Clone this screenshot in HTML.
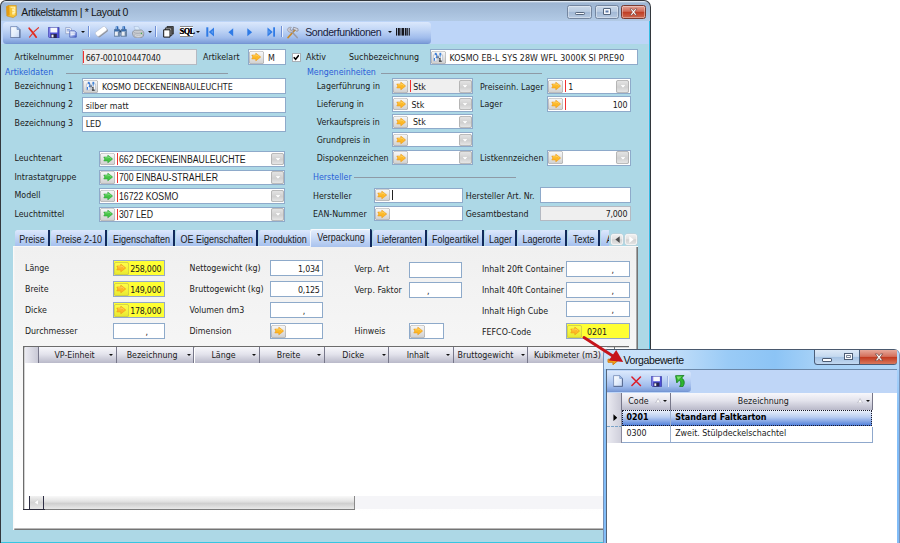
<!DOCTYPE html><html lang="de"><head><meta charset="utf-8"><title>Artikelstamm</title><style>
html,body{margin:0;padding:0}
body{width:900px;height:543px;overflow:hidden;background:#fff;position:relative;font-family:'DejaVu Sans Condensed','DejaVu Sans','Liberation Sans',sans-serif;font-stretch:condensed;font-size:8.8px;color:#1a1a1a}
div{position:absolute;box-sizing:content-box}
.lbl{height:16px;line-height:16px;white-space:pre}
.t{font-family:'DejaVu Sans Condensed','DejaVu Sans','Liberation Sans',sans-serif;font-stretch:condensed;font-size:8.8px}
.a{font-family:'Liberation Sans',sans-serif;font-stretch:normal;font-size:10px;transform:scaleX(.873);transform-origin:0 50%}
.n{letter-spacing:-.22px}
.s{font-family:'Liberation Sans',sans-serif;font-stretch:normal;font-size:10.5px;letter-spacing:-.39px}
.blue{color:#2a5fd8}
.fld{border:1px solid #8eaaca}
.red{width:1px;background:#f03030}
.abtn{border-radius:2.5px;background:linear-gradient(#fafafa,#e2e2e2 55%,#cfcfcf);box-shadow:0 0 0 .6px #a9a9a9 inset}
.abtn svg{position:absolute;left:50%;top:50%;transform:translate(-50%,-50%)}
.dd{border-radius:2.5px;background:linear-gradient(#e6e6e6,#d0d0d0 55%,#eaeaea);box-shadow:0 0 0 .8px #adadad inset}
.dd svg{position:absolute;left:50%;top:50%;transform:translate(-50%,-40%)}
.hl{height:1px;background:#8e9aa6}
.tab{height:16px;top:230.3px;border-radius:2.5px 0 0 0;background:linear-gradient(#dce8fc,#c0d4f5 50%,#a6c1ee);border-right:2px solid #122a5c;font-family:'Liberation Sans',sans-serif;font-size:10.6px;line-height:18.4px;text-align:center;white-space:pre;color:#1a1a1a}
.tsx{display:inline-block;position:relative;left:.8px;transform:scaleX(.85);margin:0 -8px}
.gh{top:346.5px;height:16.5px;background:linear-gradient(#f7f7fb,#e3e3ec 45%,#b9b9c9);border-right:1px solid #77778a;line-height:16.5px;text-align:center;font-family:'DejaVu Sans Condensed','DejaVu Sans','Liberation Sans',sans-serif;font-size:8.8px;white-space:pre}
.ga{width:0;height:0;border-left:2.2px solid transparent;border-right:2.2px solid transparent;border-top:2.6px solid #111}
</style></head><body>
<div style="left:0;top:0;width:651px;height:543px;background:#33373c;border-radius:6px 7px 0 0"></div>
<div style="left:1.2px;top:.8px;width:649px;height:543px;background:linear-gradient(#dde7f2 0,#dde7f2 .8px,#9db5d2 1.8px,#a7bfdb 11px,#b3cbe6 20.5px,#b3cbe6);border-radius:5px 6px 0 0"></div>
<div style="left:1.2px;top:21px;width:647.7px;height:23px;background:#bdd5f8"></div>
<div style="left:3px;top:21.8px;width:428.3px;height:22px;border-radius:3.5px;background:linear-gradient(#dbe8fc,#bfd4f5 38%,#a0bcec 72%,#7f9fda 94%,#6f90cf)"></div>
<div style="left:1.2px;top:44px;width:647.7px;height:498px;background:#add8e6"></div>
<div style="left:647.6px;top:44px;width:1.3px;height:498px;background:#bcd3ea"></div>
<div style="left:648.9px;top:21px;width:1.3px;height:522px;background:#35bde3"></div>
<div style="left:1.2px;top:541.9px;width:649px;height:1.2px;background:#36c6e2"></div>
<svg style="position:absolute;left:6.4px;top:4.6px" width="11" height="13" viewBox="0 0 11 13"><path d="M.5 1.6 3.2.3h7l.3 10L7.2 12.6.900 11z" fill="#f6c437" stroke="#c98a14" stroke-width=".6"/><path d="M.5 1.6 3.2.3 3.6 10.3.900 11z" fill="#e39a12"/><path d="M4.6 2.3h4.2v1.8H6.8v1.5h2v1.8h-2v1.5h2" fill="none" stroke="#fff3b8" stroke-width="1.1"/></svg>
<div class="lbl s" style="left:21.3px;top:3.8px;color:#161616">Artikelstamm | * Layout 0</div>
<div style="left:567.2px;top:5px;width:23.2px;height:12px;border:.8px solid #7486a0;border-radius:2.5px;background:linear-gradient(#c9d7e8,#b9cbe1 45%,#a3b9d6 52%,#b6c9e0);box-shadow:0 0 0 .8px rgba(255,255,255,.45) inset"></div>
<div style="left:594.5px;top:5px;width:22.4px;height:12px;border:.8px solid #7486a0;border-radius:2.5px;background:linear-gradient(#c9d7e8,#b9cbe1 45%,#a3b9d6 52%,#b6c9e0);box-shadow:0 0 0 .8px rgba(255,255,255,.45) inset"></div>
<div style="left:621px;top:5px;width:23.4px;height:12px;border:.8px solid #7a3a30;border-radius:2.5px;background:linear-gradient(#e2a195,#cf6a58 45%,#bf3b22 50%,#cf6a52);box-shadow:0 0 0 .8px rgba(255,255,255,.45) inset"></div>
<div style="left:575.2px;top:11.5px;width:7.4px;height:1.9px;background:#f6f8fb;border:.7px solid #55657c;border-radius:1.2px"></div>
<div style="left:602.5px;top:8.2px;width:6.8px;height:5.2px;background:#5c7aa8;border:.7px solid #55657c;border-radius:1px;box-shadow:0 0 0 1.5px #f6f8fb inset"></div>
<svg style="position:absolute;left:629px;top:7.5px" width="9" height="8" viewBox="0 0 9 8"><path d="M1 .8h2l1.5 1.9L6 .8h2L5.6 4 8 7.2H6L4.5 5.3 3 7.2H1L3.4 4z" fill="#fff" stroke="#6b3a36" stroke-width=".6"/></svg>
<svg style="position:absolute;left:10.2px;top:25.8px" width="10.5" height="12.5" viewBox="0 0 10.5 12.5"><defs><linearGradient id="dg" x1="0" y1="0" x2="1" y2="1"><stop offset="0" stop-color="#fbfdff"/><stop offset=".55" stop-color="#e3edfb"/><stop offset="1" stop-color="#bdd2f4"/></linearGradient></defs><path d="M.6.6h6.4l2.9 2.9v8.4H.6z" fill="url(#dg)" stroke="#7a90ba" stroke-width=".9"/><path d="M9.9 3.5v8.4H.6" fill="none" stroke="#56698f" stroke-width="1"/><path d="M7 .6v2.9h2.9z" fill="#9fc0f0" stroke="#6a84b4" stroke-width=".6"/></svg>
<svg style="position:absolute;left:28px;top:26.6px" width="11.5" height="11" viewBox="0 0 13 12.8"><path d="M1.2 1.4C3.6 4.4 6.4 7.6 9.4 11.8" fill="none" stroke="#e2281c" stroke-width="2" stroke-linecap="round"/><path d="M12 .8C8.4 3.4 4.8 7.2 1.6 11.8" fill="none" stroke="#e2392c" stroke-width="1.3" stroke-linecap="round"/></svg>
<svg style="position:absolute;left:48px;top:26.8px" width="11.5" height="11.5" viewBox="0 0 11.5 11.5"><path d="M.4.4h10.7v10.7H1.8L.4 9.7z" fill="#4d4fd6" stroke="#2a2b8e" stroke-width=".6"/><path d="M.7.7h1.3v9.8H1.6L.7 9.6z" fill="#7d7fe6"/><rect x="2.3" y=".7" width="7" height="4.8" fill="#f6f7fc"/><rect x="2.8" y="6.9" width="6" height="4.1" fill="#26264e"/><rect x="3.5" y="7.7" width="2" height="2.7" fill="#f0f1f7"/></svg>
<svg style="position:absolute;left:65px;top:27.2px" width="12.2" height="10.6" viewBox="0 0 13 11.8"><defs><linearGradient id="cg" x1="0" y1="0" x2="1" y2="1"><stop offset="0" stop-color="#f4f7fd"/><stop offset=".5" stop-color="#b9c8f0"/><stop offset="1" stop-color="#3a52c4"/></linearGradient></defs><path d="M.5.5h4.8l1.7 1.7v5.3H.5z" fill="#eef1f8" stroke="#8b9cc4" stroke-width=".8"/><path d="M1.7 2.7h3.4M1.7 4.3h3.4" stroke="#5b7fd0" stroke-width=".8"/><path d="M5 4.2h5.4l1.9 1.9v5.2H5z" fill="url(#cg)" stroke="#3f56b4" stroke-width=".8"/><path d="M6.2 6.6h4.4M6.2 8.3h4.4" stroke="#f2f5fc" stroke-width=".9"/></svg>
<div class="ga" style="left:81px;top:30.8px"></div>
<div style="left:88.3px;top:26px;width:1px;height:11px;background:#6f8fd6"></div><div style="left:89.3px;top:26.3px;width:1px;height:11px;background:#edf3fd"></div>
<svg style="position:absolute;left:94.5px;top:26.3px" width="13" height="11.5" viewBox="0 0 13 11.5"><g transform="rotate(-37 6.5 5.75)"><rect x=".6" y="4" width="12" height="5.2" rx="1.6" fill="#8f939c"/><rect x=".4" y="2.6" width="12" height="5.2" rx="1.6" fill="#fff" stroke="#b4bac8" stroke-width=".5"/></g></svg>
<svg style="position:absolute;left:114px;top:26.3px" width="13" height="10.8" viewBox="0 0 13 10.8"><path d="M1.8.3h2.4l.3 3.3H1.5z" fill="#2b66b4"/><path d="M2.5.5v3" stroke="#a9cdf2" stroke-width=".7"/><path d="M.5 3.5h5l.3 6.7H.2z" fill="#e9edf3" stroke="#37577f" stroke-width=".7"/><path d="M.6 3.6h4.8l.1 2H.5z" fill="#3a6cab"/><path d="M3.9 5.6h1.5l.2 4.4H3.9z" fill="#6d87a8"/><g transform="translate(6.8 0)"><path d="M1.8.3h2.4l.3 3.3H1.5z" fill="#2b66b4"/><path d="M2.5.5v3" stroke="#a9cdf2" stroke-width=".7"/><path d="M.5 3.5h5l.3 6.7H.2z" fill="#e9edf3" stroke="#37577f" stroke-width=".7"/><path d="M.6 3.6h4.8l.1 2H.5z" fill="#3a6cab"/><path d="M3.9 5.6h1.5l.2 4.4H3.9z" fill="#6d87a8"/></g><path d="M5.5 4.4h1.6v2H5.5z" fill="#27466e"/></svg>
<svg style="position:absolute;left:132.3px;top:25.8px" width="12.4" height="12.6" viewBox="0 0 12.4 12.6"><path d="M2 .5 6.2.3 8.6 4.6 3.6 5.2z" fill="#d6e8fb" stroke="#9fb4d2" stroke-width=".5"/><path d="M.5 6.2C1.5 4.4 3.4 3.8 5 4.2L9.4 4C11 4.6 11.9 6 11.8 7.6L11.4 10.2C9.8 12 6.4 12.6 3.6 11.8 1.6 11 .3 9 .5 6.2z" fill="#c9ccd1" stroke="#7f858f" stroke-width=".7"/><path d="M2.4 8.6C4.6 10 8 10 10.6 8.4L10.4 10C8 11.4 4.6 11.2 2.6 10z" fill="#eef0f2" stroke="#8b919b" stroke-width=".4"/><path d="M1.6 6.4C3.8 7.8 8.4 7.6 10.8 6.2" fill="none" stroke="#9096a0" stroke-width=".6"/><circle cx="9.5" cy="7.4" r=".7" fill="#3fae4a"/></svg>
<div class="ga" style="left:148px;top:30.8px"></div>
<div style="left:155.10000000000002px;top:26px;width:1px;height:11px;background:#6f8fd6"></div><div style="left:156.10000000000002px;top:26.3px;width:1px;height:11px;background:#edf3fd"></div>
<svg style="position:absolute;left:163px;top:26.3px" width="11" height="11.8" viewBox="0 0 11 11.8"><path d="M4 .5h6.3v7.6H4z" fill="#5e5e5e" stroke="#222" stroke-width=".8"/><path d="M2.4 1.9h6.4v7.7H2.4z" fill="#a9a9a9" stroke="#222" stroke-width=".8"/><path d="M.7 3.8h6.3v7.3H.7z" fill="#fff" stroke="#111" stroke-width="1"/></svg>
<div style="left:179.6px;top:26px;width:13px;height:11.4px;background:#fff;border-top:1.2px solid #8a8a8a;border-bottom:1.2px solid #8a8a8a;box-sizing:border-box"></div>
<div style="left:179.6px;top:26px;width:13px;height:11.4px;line-height:11.4px;text-align:center;font-family:'Liberation Serif',serif;font-weight:bold;font-size:8px;color:#000;letter-spacing:-.35px;text-shadow:.3px 0 0 #000">SQL</div>
<div class="ga" style="left:196px;top:30.8px"></div>
<svg style="position:absolute;left:206px;top:27px" width="8.5" height="10" viewBox="0 0 8.5 10"><rect x=".3" y=".3" width="2" height="9.4" fill="#2f7be6"/><path d="M8 .4 2.8 5 8 9.6z" fill="#2f7be6"/><path d="M7.2 3 5 5l2.2 2z" fill="#5b9bf0"/></svg>
<svg style="position:absolute;left:228px;top:28px" width="5.5" height="8.5" viewBox="0 0 5.5 8.5"><path d="M5.2.3.4 4.25l4.8 3.95z" fill="#2f7be6"/></svg>
<svg style="position:absolute;left:247.3px;top:28px" width="5.5" height="8.5" viewBox="0 0 5.5 8.5"><path d="M.3.3l4.8 3.95L.3 8.2z" fill="#2f7be6"/></svg>
<svg style="position:absolute;left:266.6px;top:27px" width="8.5" height="10" viewBox="0 0 8.5 10"><rect x="6.2" y=".3" width="2" height="9.4" fill="#2f7be6"/><path d="M.5.4 5.7 5 .5 9.6z" fill="#2f7be6"/><path d="M1.3 3 3.5 5 1.3 7z" fill="#5b9bf0"/></svg>
<div style="left:280.8px;top:26px;width:1px;height:11px;background:#6f8fd6"></div><div style="left:281.8px;top:26.3px;width:1px;height:11px;background:#edf3fd"></div>
<svg style="position:absolute;left:286px;top:25.5px" width="13" height="13" viewBox="0 0 13 13"><path d="M2 11.6 9.4 3.4" stroke="#c98a2b" stroke-width="1.6" stroke-linecap="round"/><path d="M11.2 11.6 4.2 4" stroke="#9a9aa4" stroke-width="1.5" stroke-linecap="round"/><path d="M1.4 3.4C2 1.6 3.8.8 5.4 1.4L4 3l.6 1.2 1.6.2 1-1.6c.8 1.6-.2 3.4-2 3.6-2 .2-3.6-1.2-3.8-3z" fill="#c9c9d2" stroke="#7c7c88" stroke-width=".5"/><path d="M7.6 1.2 11.8 2.6 12.2 4.6 10.6 5.4 9.8 4.2 7 3.4z" fill="#d9d9e0" stroke="#70707c" stroke-width=".6"/></svg>
<div class="lbl s" style="left:305.2px;top:24.3px;color:#16203a">Sonderfunktionen</div>
<div class="ga" style="left:387.8px;top:31.2px"></div>
<svg style="position:absolute;left:396px;top:28px" width="14" height="7.6" viewBox="0 0 14 7.6"><rect x="0" y="0" width="1.2" height="7.6" fill="#15151c"/><rect x="2" y="0" width="1.8" height="7.6" fill="#15151c"/><rect x="4.5" y="0" width="1" height="7.6" fill="#15151c"/><rect x="6" y="0" width="2.2" height="7.6" fill="#15151c"/><rect x="9" y="0" width="1.6" height="7.6" fill="#15151c"/><rect x="11.2" y="0" width="0.9" height="7.6" fill="#15151c"/><rect x="12.8" y="0" width="1" height="7.6" fill="#15151c"/></svg>
<div class="lbl t" style="left:14.5px;top:49px;">Artikelnummer</div>
<div class="fld" style="left:82px;top:49.3px;width:112.5px;height:13.9px;background:#efefef;border-color:#b4b9c2"></div>
<div class="red" style="left:83.1px;top:51.3px;height:11.9px"></div>
<div class="lbl t n" style="left:85.7px;top:49.95px;">667-001010447040</div>
<div class="lbl t" style="left:203px;top:49.3px;">Artikelart</div>
<div class="fld" style="left:247.5px;top:49.3px;width:36px;height:13.9px;background:#fff;border-color:#8eaaca"></div>
<div class="abtn" style="left:248.7px;top:50.8px;width:15px;height:12.9px;"><svg class="ar" viewBox="0 0 12 10" width="10.5" height="9.2"><path d="M1.2 2.8h4.6V.6L11.4 5 5.8 9.4V7.2H1.2L2.4 5z" fill="#fdb827" stroke="#ee9a16" stroke-width=".7" stroke-linejoin="round"/><path d="M2.6 3.6h4V2.4L9.6 4.6" fill="none" stroke="#ffd96a" stroke-width=".8"/></svg></div>
<div class="lbl t" style="left:268px;top:49.95px;">M</div>
<div style="left:291.5px;top:53px;width:7.2px;height:7.4px;background:#fff;border:.8px solid #a9afb6"></div>
<svg style="position:absolute;left:292.8px;top:54.2px" width="6.6" height="6.6" viewBox="0 0 7 6.6"><path d="M.8 3.2 2.8 5.4 6.2 1" fill="none" stroke="#000" stroke-width="1.7"/></svg>
<div class="lbl t" style="left:306px;top:49.3px;">Aktiv</div>
<div class="lbl t" style="left:349px;top:49.3px;">Suchbezeichnung</div>
<div class="fld" style="left:429.5px;top:49.3px;width:206px;height:13.9px;background:#fff;border-color:#8eaaca"></div>
<div class="abtn" style="left:430.7px;top:50.8px;width:15px;height:12.9px;"><svg class="ar" viewBox="0 0 12 10" width="11.5" height="9.5"><path d="M2.6.4h1.8v2.4H2.6zM7.6.4h1.8v2.4H7.6z" fill="#3f7fd8"/><path d="M1.2 2.8h3.8v6.6H1.2zM7 2.8h3.8v6.6H7z" fill="#f4f6fa" stroke="#9aa6ba" stroke-width=".5"/><path d="M3.8 1.5c1.4 1.2 1.4 3.2 0 4.6M2.2 6v3" fill="none" stroke="#2f74d8" stroke-width="1.1"/><path d="M8.4 1.2v3.6" stroke="#3f8ae0" stroke-width="1"/><path d="M5 4.2h2v2.2H5z" fill="#6d7a90"/><path d="M7.2 6.4 8.6 5.6v3.8H7.6V7.2z" fill="#111"/><path d="M7 9.4h3" stroke="#111" stroke-width=".9"/></svg></div>
<div class="lbl t" style="left:449.5px;top:49.95px;letter-spacing:.08px">KOSMO EB-L SYS 28W WFL 3000K SI PRE90</div>
<div class="lbl t blue" style="left:5px;top:64px;">Artikeldaten</div>
<div class="hl" style="left:66px;top:72.5px;width:161.5px"></div>
<div class="lbl t blue" style="left:307px;top:64px;">Mengeneinheiten</div>
<div class="hl" style="left:380.5px;top:72.5px;width:161px"></div>
<div class="lbl t" style="left:14.5px;top:77.7px;">Bezeichnung 1</div>
<div class="fld" style="left:82px;top:78.3px;width:201.5px;height:13.9px;background:#fff;border-color:#8eaaca"></div>
<div class="abtn" style="left:83.2px;top:79.8px;width:15px;height:12.9px;"><svg class="ar" viewBox="0 0 12 10" width="11.5" height="9.5"><path d="M2.6.4h1.8v2.4H2.6zM7.6.4h1.8v2.4H7.6z" fill="#3f7fd8"/><path d="M1.2 2.8h3.8v6.6H1.2zM7 2.8h3.8v6.6H7z" fill="#f4f6fa" stroke="#9aa6ba" stroke-width=".5"/><path d="M3.8 1.5c1.4 1.2 1.4 3.2 0 4.6M2.2 6v3" fill="none" stroke="#2f74d8" stroke-width="1.1"/><path d="M8.4 1.2v3.6" stroke="#3f8ae0" stroke-width="1"/><path d="M5 4.2h2v2.2H5z" fill="#6d7a90"/><path d="M7.2 6.4 8.6 5.6v3.8H7.6V7.2z" fill="#111"/><path d="M7 9.4h3" stroke="#111" stroke-width=".9"/></svg></div>
<div class="lbl t" style="left:102px;top:78.95px;">KOSMO DECKENEINBAULEUCHTE</div>
<div class="lbl t" style="left:14.5px;top:96.4px;">Bezeichnung 2</div>
<div class="fld" style="left:82px;top:97px;width:201.5px;height:13.9px;background:#fff;border-color:#8eaaca"></div>
<div class="lbl t" style="left:85.7px;top:97.65px;">silber matt</div>
<div class="lbl t" style="left:14.5px;top:115px;">Bezeichnung 3</div>
<div class="fld" style="left:82px;top:115.7px;width:201.5px;height:13.9px;background:#fff;border-color:#8eaaca"></div>
<div class="lbl t" style="left:85.7px;top:116.35000000000001px;">LED</div>
<div class="lbl t" style="left:14.5px;top:150px;">Leuchtenart</div>
<div class="fld" style="left:99.2px;top:151.3px;width:184.3px;height:13.4px;background:#fff;border-color:#8eaaca"></div>
<div class="abtn" style="left:100.4px;top:152.8px;width:15px;height:12.4px;"><svg class="ar" viewBox="0 0 12 10" width="10.5" height="9.2"><path d="M1.2 2.8h4.6V.6L11.4 5 5.8 9.4V7.2H1.2L2.4 5z" fill="#46c546" stroke="#2aa336" stroke-width=".7" stroke-linejoin="round"/><path d="M2.6 3.6h4V2.4L9.6 4.6" fill="none" stroke="#8fe58a" stroke-width=".8"/></svg></div>
<div class="red" style="left:117.4px;top:153.3px;height:11.4px"></div>
<div class="dd" style="left:271px;top:152.8px;width:13px;height:12.4px"><svg viewBox="0 0 8 5" width="7" height="4.2"><path d="M.5.5h7L4 4.5z" fill="#ffffff" stroke="#bdbdbd" stroke-width=".4"/></svg></div>
<div class="lbl a" style="left:119.2px;top:151.7px;">662 DECKENEINBAULEUCHTE</div>
<div class="lbl t" style="left:14.5px;top:168.5px;">Intrastatgruppe</div>
<div class="fld" style="left:99.2px;top:169.8px;width:184.3px;height:13.4px;background:#fff;border-color:#8eaaca"></div>
<div class="abtn" style="left:100.4px;top:171.3px;width:15px;height:12.4px;"><svg class="ar" viewBox="0 0 12 10" width="10.5" height="9.2"><path d="M1.2 2.8h4.6V.6L11.4 5 5.8 9.4V7.2H1.2L2.4 5z" fill="#46c546" stroke="#2aa336" stroke-width=".7" stroke-linejoin="round"/><path d="M2.6 3.6h4V2.4L9.6 4.6" fill="none" stroke="#8fe58a" stroke-width=".8"/></svg></div>
<div class="red" style="left:117.4px;top:171.8px;height:11.4px"></div>
<div class="dd" style="left:271px;top:171.3px;width:13px;height:12.4px"><svg viewBox="0 0 8 5" width="7" height="4.2"><path d="M.5.5h7L4 4.5z" fill="#ffffff" stroke="#bdbdbd" stroke-width=".4"/></svg></div>
<div class="lbl a" style="left:119.2px;top:170.2px;">700 EINBAU-STRAHLER</div>
<div class="lbl t" style="left:14.5px;top:187px;">Modell</div>
<div class="fld" style="left:99.2px;top:188.3px;width:184.3px;height:13.4px;background:#fff;border-color:#8eaaca"></div>
<div class="abtn" style="left:100.4px;top:189.8px;width:15px;height:12.4px;"><svg class="ar" viewBox="0 0 12 10" width="10.5" height="9.2"><path d="M1.2 2.8h4.6V.6L11.4 5 5.8 9.4V7.2H1.2L2.4 5z" fill="#46c546" stroke="#2aa336" stroke-width=".7" stroke-linejoin="round"/><path d="M2.6 3.6h4V2.4L9.6 4.6" fill="none" stroke="#8fe58a" stroke-width=".8"/></svg></div>
<div class="red" style="left:117.4px;top:190.3px;height:11.4px"></div>
<div class="dd" style="left:271px;top:189.8px;width:13px;height:12.4px"><svg viewBox="0 0 8 5" width="7" height="4.2"><path d="M.5.5h7L4 4.5z" fill="#ffffff" stroke="#bdbdbd" stroke-width=".4"/></svg></div>
<div class="lbl a" style="left:119.2px;top:188.7px;">16722 KOSMO</div>
<div class="lbl t" style="left:14.5px;top:205.5px;">Leuchtmittel</div>
<div class="fld" style="left:99.2px;top:206.8px;width:184.3px;height:13.4px;background:#fff;border-color:#8eaaca"></div>
<div class="abtn" style="left:100.4px;top:208.3px;width:15px;height:12.4px;"><svg class="ar" viewBox="0 0 12 10" width="10.5" height="9.2"><path d="M1.2 2.8h4.6V.6L11.4 5 5.8 9.4V7.2H1.2L2.4 5z" fill="#46c546" stroke="#2aa336" stroke-width=".7" stroke-linejoin="round"/><path d="M2.6 3.6h4V2.4L9.6 4.6" fill="none" stroke="#8fe58a" stroke-width=".8"/></svg></div>
<div class="red" style="left:117.4px;top:208.8px;height:11.4px"></div>
<div class="dd" style="left:271px;top:208.3px;width:13px;height:12.4px"><svg viewBox="0 0 8 5" width="7" height="4.2"><path d="M.5.5h7L4 4.5z" fill="#ffffff" stroke="#bdbdbd" stroke-width=".4"/></svg></div>
<div class="lbl a" style="left:119.2px;top:207.2px;">307 LED</div>
<div class="lbl t" style="left:316.7px;top:78.4px;">Lagerführung in</div>
<div class="fld" style="left:392.2px;top:78.2px;width:79px;height:14px;background:#efefef;border-color:#8eaaca"></div>
<div class="abtn" style="left:393.4px;top:79.7px;width:15px;height:13px;"><svg class="ar" viewBox="0 0 12 10" width="10.5" height="9.2"><path d="M1.2 2.8h4.6V.6L11.4 5 5.8 9.4V7.2H1.2L2.4 5z" fill="#fdb827" stroke="#ee9a16" stroke-width=".7" stroke-linejoin="round"/><path d="M2.6 3.6h4V2.4L9.6 4.6" fill="none" stroke="#ffd96a" stroke-width=".8"/></svg></div>
<div class="red" style="left:410.4px;top:80.2px;height:12px"></div>
<div class="dd" style="left:458.7px;top:79.7px;width:13px;height:13px"><svg viewBox="0 0 8 5" width="7" height="4.2"><path d="M.5.5h7L4 4.5z" fill="#ffffff" stroke="#bdbdbd" stroke-width=".4"/></svg></div>
<div class="lbl t" style="left:413.2px;top:78.9px;">Stk</div>
<div class="lbl t" style="left:316.7px;top:96.4px;">Lieferung in</div>
<div class="fld" style="left:392.2px;top:96.2px;width:79px;height:13.5px;background:#fff;border-color:#8eaaca"></div>
<div class="abtn" style="left:393.4px;top:97.7px;width:15px;height:12.5px;"><svg class="ar" viewBox="0 0 12 10" width="10.5" height="9.2"><path d="M1.2 2.8h4.6V.6L11.4 5 5.8 9.4V7.2H1.2L2.4 5z" fill="#fdb827" stroke="#ee9a16" stroke-width=".7" stroke-linejoin="round"/><path d="M2.6 3.6h4V2.4L9.6 4.6" fill="none" stroke="#ffd96a" stroke-width=".8"/></svg></div>
<div class="dd" style="left:458.7px;top:97.7px;width:13px;height:12.5px"><svg viewBox="0 0 8 5" width="7" height="4.2"><path d="M.5.5h7L4 4.5z" fill="#ffffff" stroke="#bdbdbd" stroke-width=".4"/></svg></div>
<div class="lbl t" style="left:411.5px;top:96.65px;">Stk</div>
<div class="lbl t" style="left:316.7px;top:114.3px;">Verkaufspreis in</div>
<div class="fld" style="left:392.2px;top:114.1px;width:79px;height:13.3px;background:#fff;border-color:#8eaaca"></div>
<div class="abtn" style="left:393.4px;top:115.6px;width:15px;height:12.3px;"><svg class="ar" viewBox="0 0 12 10" width="10.5" height="9.2"><path d="M1.2 2.8h4.6V.6L11.4 5 5.8 9.4V7.2H1.2L2.4 5z" fill="#fdb827" stroke="#ee9a16" stroke-width=".7" stroke-linejoin="round"/><path d="M2.6 3.6h4V2.4L9.6 4.6" fill="none" stroke="#ffd96a" stroke-width=".8"/></svg></div>
<div class="dd" style="left:458.7px;top:115.6px;width:13px;height:12.3px"><svg viewBox="0 0 8 5" width="7" height="4.2"><path d="M.5.5h7L4 4.5z" fill="#ffffff" stroke="#bdbdbd" stroke-width=".4"/></svg></div>
<div class="lbl t" style="left:413px;top:114.45px;">Stk</div>
<div class="lbl t" style="left:316.7px;top:132.2px;">Grundpreis in</div>
<div class="fld" style="left:392.2px;top:132px;width:79px;height:13.3px;background:#fff;border-color:#8eaaca"></div>
<div class="abtn" style="left:393.4px;top:133.5px;width:15px;height:12.3px;"><svg class="ar" viewBox="0 0 12 10" width="10.5" height="9.2"><path d="M1.2 2.8h4.6V.6L11.4 5 5.8 9.4V7.2H1.2L2.4 5z" fill="#fdb827" stroke="#ee9a16" stroke-width=".7" stroke-linejoin="round"/><path d="M2.6 3.6h4V2.4L9.6 4.6" fill="none" stroke="#ffd96a" stroke-width=".8"/></svg></div>
<div class="dd" style="left:458.7px;top:133.5px;width:13px;height:12.3px"><svg viewBox="0 0 8 5" width="7" height="4.2"><path d="M.5.5h7L4 4.5z" fill="#ffffff" stroke="#bdbdbd" stroke-width=".4"/></svg></div>
<div class="lbl t" style="left:316.7px;top:150px;">Dispokennzeichen</div>
<div class="fld" style="left:392.2px;top:149.8px;width:79px;height:13.5px;background:#fff;border-color:#8eaaca"></div>
<div class="abtn" style="left:393.4px;top:151.3px;width:15px;height:12.5px;"><svg class="ar" viewBox="0 0 12 10" width="10.5" height="9.2"><path d="M1.2 2.8h4.6V.6L11.4 5 5.8 9.4V7.2H1.2L2.4 5z" fill="#fdb827" stroke="#ee9a16" stroke-width=".7" stroke-linejoin="round"/><path d="M2.6 3.6h4V2.4L9.6 4.6" fill="none" stroke="#ffd96a" stroke-width=".8"/></svg></div>
<div class="dd" style="left:458.7px;top:151.3px;width:13px;height:12.5px"><svg viewBox="0 0 8 5" width="7" height="4.2"><path d="M.5.5h7L4 4.5z" fill="#ffffff" stroke="#bdbdbd" stroke-width=".4"/></svg></div>
<div class="lbl t" style="left:480px;top:78.7px;">Preiseinh. Lager</div>
<div class="fld" style="left:547.1px;top:78px;width:81.5px;height:14.099999999999998px;background:#fff;border-color:#8eaaca"></div>
<div class="abtn" style="left:548.3000000000001px;top:79.5px;width:15px;height:13.099999999999998px;"><svg class="ar" viewBox="0 0 12 10" width="10.5" height="9.2"><path d="M1.2 2.8h4.6V.6L11.4 5 5.8 9.4V7.2H1.2L2.4 5z" fill="#fdb827" stroke="#ee9a16" stroke-width=".7" stroke-linejoin="round"/><path d="M2.6 3.6h4V2.4L9.6 4.6" fill="none" stroke="#ffd96a" stroke-width=".8"/></svg></div>
<div class="red" style="left:565.3000000000001px;top:80px;height:12.099999999999998px"></div>
<div class="dd" style="left:616.1px;top:79.5px;width:13px;height:13.099999999999998px"><svg viewBox="0 0 8 5" width="7" height="4.2"><path d="M.5.5h7L4 4.5z" fill="#ffffff" stroke="#bdbdbd" stroke-width=".4"/></svg></div>
<div class="lbl t" style="left:568.3px;top:78.75px;">1</div>
<div class="lbl t" style="left:480px;top:96.2px;">Lager</div>
<div class="fld" style="left:547.1px;top:96.3px;width:81.5px;height:13.700000000000001px;background:#fff;border-color:#8eaaca"></div>
<div class="abtn" style="left:548.3000000000001px;top:97.8px;width:15px;height:12.700000000000001px;"><svg class="ar" viewBox="0 0 12 10" width="10.5" height="9.2"><path d="M1.2 2.8h4.6V.6L11.4 5 5.8 9.4V7.2H1.2L2.4 5z" fill="#fdb827" stroke="#ee9a16" stroke-width=".7" stroke-linejoin="round"/><path d="M2.6 3.6h4V2.4L9.6 4.6" fill="none" stroke="#ffd96a" stroke-width=".8"/></svg></div>
<div class="red" style="left:565.3000000000001px;top:98.3px;height:11.700000000000001px"></div>
<div class="lbl t n" style="right:272.79999999999995px;top:96.85px;">100</div>
<div class="lbl t" style="left:480px;top:150px;">Listkennzeichen</div>
<div class="fld" style="left:547.1px;top:149.8px;width:81.5px;height:13.8px;background:#fff;border-color:#8eaaca"></div>
<div class="abtn" style="left:548.3000000000001px;top:151.3px;width:15px;height:12.8px;"><svg class="ar" viewBox="0 0 12 10" width="10.5" height="9.2"><path d="M1.2 2.8h4.6V.6L11.4 5 5.8 9.4V7.2H1.2L2.4 5z" fill="#fdb827" stroke="#ee9a16" stroke-width=".7" stroke-linejoin="round"/><path d="M2.6 3.6h4V2.4L9.6 4.6" fill="none" stroke="#ffd96a" stroke-width=".8"/></svg></div>
<div class="dd" style="left:616.1px;top:151.3px;width:13px;height:12.8px"><svg viewBox="0 0 8 5" width="7" height="4.2"><path d="M.5.5h7L4 4.5z" fill="#ffffff" stroke="#bdbdbd" stroke-width=".4"/></svg></div>
<div class="lbl t blue" style="left:313px;top:169px;">Hersteller</div>
<div class="hl" style="left:354px;top:177px;width:161.5px"></div>
<div class="lbl t" style="left:313px;top:187.5px;">Hersteller</div>
<div class="fld" style="left:373.5px;top:187.5px;width:87.5px;height:13.200000000000001px;background:#fff;border-color:#8eaaca"></div>
<div class="abtn" style="left:374.7px;top:189px;width:15px;height:12.200000000000001px;"><svg class="ar" viewBox="0 0 12 10" width="10.5" height="9.2"><path d="M1.2 2.8h4.6V.6L11.4 5 5.8 9.4V7.2H1.2L2.4 5z" fill="#fdb827" stroke="#ee9a16" stroke-width=".7" stroke-linejoin="round"/><path d="M2.6 3.6h4V2.4L9.6 4.6" fill="none" stroke="#ffd96a" stroke-width=".8"/></svg></div>
<div style="left:392.2px;top:190px;width:1px;height:10px;background:#222"></div>
<div class="lbl t" style="left:313px;top:206px;">EAN-Nummer</div>
<div class="fld" style="left:373.5px;top:206.20000000000002px;width:87.5px;height:13.200000000000001px;background:#fff;border-color:#8eaaca"></div>
<div class="abtn" style="left:374.7px;top:207.70000000000002px;width:15px;height:12.200000000000001px;"><svg class="ar" viewBox="0 0 12 10" width="10.5" height="9.2"><path d="M1.2 2.8h4.6V.6L11.4 5 5.8 9.4V7.2H1.2L2.4 5z" fill="#fdb827" stroke="#ee9a16" stroke-width=".7" stroke-linejoin="round"/><path d="M2.6 3.6h4V2.4L9.6 4.6" fill="none" stroke="#ffd96a" stroke-width=".8"/></svg></div>
<div class="lbl t" style="left:465.7px;top:187.5px;">Hersteller Art. Nr.</div>
<div class="fld" style="left:539.5px;top:187px;width:89px;height:13.6px;background:#fff;border-color:#8eaaca"></div>
<div class="lbl t" style="left:465.7px;top:205.7px;">Gesamtbestand</div>
<div class="fld" style="left:539.5px;top:205.60000000000002px;width:89px;height:13.8px;background:#efefef;border-color:#b4b9c2"></div>
<div class="lbl t n" style="right:272.79999999999995px;top:206.20000000000002px;">7,000</div>
<div style="left:13px;top:246.3px;width:624.5px;height:284.2px;background:linear-gradient(#f0f0f0,#fff 95%);box-shadow:1.3px 1px 0 0 #faf9f8 inset,-1.6px -1.6px 0 0 #747474 inset"></div>
<div class="tab" style="left:15.3px;width:32.7px"><span class="tsx">Preise</span></div>
<div class="tab" style="left:50.7px;width:54.3px"><span class="tsx">Preise 2-10</span></div>
<div class="tab" style="left:107.7px;width:65.3px"><span class="tsx">Eigenschaften</span></div>
<div class="tab" style="left:176px;width:80.30000000000001px"><span class="tsx">OE Eigenschaften</span></div>
<div class="tab" style="left:259px;width:50.5px"><span class="tsx">Produktion</span></div>
<div class="tab" style="left:373px;width:51.69999999999999px"><span class="tsx">Lieferanten</span></div>
<div class="tab" style="left:427.6px;width:54.69999999999999px"><span class="tsx">Folgeartikel</span></div>
<div class="tab" style="left:485.3px;width:29.69999999999999px"><span class="tsx">Lager</span></div>
<div class="tab" style="left:518px;width:46.700000000000045px"><span class="tsx">Lagerorte</span></div>
<div class="tab" style="left:567.7px;width:30.59999999999991px"><span class="tsx">Texte</span></div>
<div class="tab" style="left:601px;width:7.7px;border-right:none;overflow:hidden;text-align:left"><span class="tsx" style="transform-origin:0 50%;margin:0;padding-left:5.3px">Artikel</span></div>
<div class="tab" style="left:310.4px;top:228.8px;width:59.9px;height:18.4px;line-height:17.4px;background:linear-gradient(#e6effd,#c9daf6 50%,#a9c3ee);border-radius:2px 1.5px 0 0;box-shadow:1px 1px 0 0 rgba(255,255,255,.7) inset"><span class="tsx">Verpackung</span></div>
<div style="left:611px;top:233.7px;width:12.2px;height:11.4px;border-radius:3px;background:linear-gradient(#f1f1f1,#e2e2e2 45%,#d2d2d2 52%,#e6e6e6);box-shadow:0 0 0 .8px #f6f6f6 inset,0 0 0 .5px #c9ccd0"></div>
<svg style="position:absolute;left:614.8px;top:235.9px" width="5" height="7.2" viewBox="0 0 5 7.2"><path d="M4.7.3.4 3.6l4.3 3.3z" fill="#4e4e4e"/></svg>
<div style="left:624.8px;top:233.7px;width:12.4px;height:11.4px;border-radius:3px;background:linear-gradient(#f1f1f1,#e2e2e2 45%,#d2d2d2 52%,#e6e6e6);box-shadow:0 0 0 .8px #f6f6f6 inset,0 0 0 .5px #c9ccd0"></div>
<svg style="position:absolute;left:629px;top:235.9px" width="5" height="7.2" viewBox="0 0 5 7.2"><path d="M.3.3l4.3 3.3L.3 6.9z" fill="#fff"/></svg>
<div class="lbl t" style="left:25px;top:260.2px;">Länge</div>
<div class="fld" style="left:112.5px;top:260px;width:50.5px;height:14.2px;background:#ffff33;border-color:#94a8c8"></div>
<div class="abtn" style="left:113.7px;top:261.5px;width:15px;height:13.2px;background:linear-gradient(#ffff4a,#f2f23a 60%,#e6e62e);box-shadow:0 0 0 .7px #c9c94a inset;"><svg class="ar" viewBox="0 0 12 10" width="10.5" height="9.2"><path d="M1.2 2.8h4.6V.6L11.4 5 5.8 9.4V7.2H1.2L2.4 5z" fill="#fdb827" stroke="#ee9a16" stroke-width=".7" stroke-linejoin="round"/><path d="M2.6 3.6h4V2.4L9.6 4.6" fill="none" stroke="#ffd96a" stroke-width=".8"/></svg></div>
<div class="lbl t n" style="right:738.7px;top:260.8px;">258,000</div>
<div class="lbl t" style="left:25px;top:281.4px;">Breite</div>
<div class="fld" style="left:112.5px;top:281.2px;width:50.5px;height:14.2px;background:#ffff33;border-color:#94a8c8"></div>
<div class="abtn" style="left:113.7px;top:282.7px;width:15px;height:13.2px;background:linear-gradient(#ffff4a,#f2f23a 60%,#e6e62e);box-shadow:0 0 0 .7px #c9c94a inset;"><svg class="ar" viewBox="0 0 12 10" width="10.5" height="9.2"><path d="M1.2 2.8h4.6V.6L11.4 5 5.8 9.4V7.2H1.2L2.4 5z" fill="#fdb827" stroke="#ee9a16" stroke-width=".7" stroke-linejoin="round"/><path d="M2.6 3.6h4V2.4L9.6 4.6" fill="none" stroke="#ffd96a" stroke-width=".8"/></svg></div>
<div class="lbl t n" style="right:738.7px;top:282px;">149,000</div>
<div class="lbl t" style="left:25px;top:302.4px;">Dicke</div>
<div class="fld" style="left:112.5px;top:302.2px;width:50.5px;height:14.2px;background:#ffff33;border-color:#94a8c8"></div>
<div class="abtn" style="left:113.7px;top:303.7px;width:15px;height:13.2px;background:linear-gradient(#ffff4a,#f2f23a 60%,#e6e62e);box-shadow:0 0 0 .7px #c9c94a inset;"><svg class="ar" viewBox="0 0 12 10" width="10.5" height="9.2"><path d="M1.2 2.8h4.6V.6L11.4 5 5.8 9.4V7.2H1.2L2.4 5z" fill="#fdb827" stroke="#ee9a16" stroke-width=".7" stroke-linejoin="round"/><path d="M2.6 3.6h4V2.4L9.6 4.6" fill="none" stroke="#ffd96a" stroke-width=".8"/></svg></div>
<div class="lbl t n" style="right:738.7px;top:303px;">178,000</div>
<div class="lbl t" style="left:25px;top:323.2px;">Durchmesser</div>
<div class="fld" style="left:112.5px;top:323px;width:50.5px;height:14.2px;background:#fff;border-color:#8eaaca"></div>
<div class="lbl t" style="left:145.5px;top:323.8px;">,</div>
<div class="lbl t" style="left:189.5px;top:260.2px;">Nettogewicht (kg)</div>
<div class="fld" style="left:270px;top:260px;width:51px;height:14.2px;background:#fff;border-color:#8eaaca"></div>
<div class="lbl t n" style="right:580.4px;top:260.8px;">1,034</div>
<div class="lbl t" style="left:189.5px;top:281.4px;">Bruttogewicht (kg)</div>
<div class="fld" style="left:270px;top:281.2px;width:51px;height:14.2px;background:#fff;border-color:#8eaaca"></div>
<div class="lbl t n" style="right:580.4px;top:282px;">0,125</div>
<div class="lbl t" style="left:189.5px;top:302.4px;">Volumen dm3</div>
<div class="fld" style="left:270px;top:302.2px;width:51px;height:14.2px;background:#fff;border-color:#8eaaca"></div>
<div class="lbl t" style="left:302.8px;top:303px;">,</div>
<div class="lbl t" style="left:189.5px;top:323.2px;">Dimension</div>
<div class="fld" style="left:270px;top:323px;width:51px;height:14.2px;background:#fff;border-color:#8eaaca"></div>
<div class="abtn" style="left:271.2px;top:324.5px;width:15px;height:13.2px;"><svg class="ar" viewBox="0 0 12 10" width="10.5" height="9.2"><path d="M1.2 2.8h4.6V.6L11.4 5 5.8 9.4V7.2H1.2L2.4 5z" fill="#fdb827" stroke="#ee9a16" stroke-width=".7" stroke-linejoin="round"/><path d="M2.6 3.6h4V2.4L9.6 4.6" fill="none" stroke="#ffd96a" stroke-width=".8"/></svg></div>
<div class="lbl t" style="left:354.5px;top:261.3px;">Verp. Art</div>
<div class="fld" style="left:409.2px;top:261.8px;width:51px;height:14px;background:#fff;border-color:#8eaaca"></div>
<div class="lbl t" style="left:354.5px;top:282px;">Verp. Faktor</div>
<div class="fld" style="left:409.2px;top:282.1px;width:51px;height:13.8px;background:#fff;border-color:#8eaaca"></div>
<div class="lbl t" style="left:427px;top:282.7px;">,</div>
<div class="lbl t" style="left:354.5px;top:323.3px;">Hinweis</div>
<div class="fld" style="left:409.2px;top:323.1px;width:32.5px;height:14.2px;background:#fff;border-color:#8eaaca"></div>
<div class="abtn" style="left:410.4px;top:324.6px;width:15px;height:13.2px;"><svg class="ar" viewBox="0 0 12 10" width="10.5" height="9.2"><path d="M1.2 2.8h4.6V.6L11.4 5 5.8 9.4V7.2H1.2L2.4 5z" fill="#fdb827" stroke="#ee9a16" stroke-width=".7" stroke-linejoin="round"/><path d="M2.6 3.6h4V2.4L9.6 4.6" fill="none" stroke="#ffd96a" stroke-width=".8"/></svg></div>
<div class="lbl t" style="left:482px;top:261.2px;">Inhalt 20ft Container</div>
<div class="fld" style="left:566.2px;top:261.1px;width:62.3px;height:14.2px;background:#fff;border-color:#8eaaca"></div>
<div class="lbl t" style="left:611.6px;top:261.90000000000003px;">,</div>
<div class="lbl t" style="left:482px;top:282px;">Inhalt 40ft Container</div>
<div class="fld" style="left:566.2px;top:281.8px;width:62.3px;height:14.2px;background:#fff;border-color:#8eaaca"></div>
<div class="lbl t" style="left:611.6px;top:282.6px;">,</div>
<div class="lbl t" style="left:482px;top:303px;">Inhalt High Cube</div>
<div class="fld" style="left:566.2px;top:301.3px;width:62.3px;height:14.2px;background:#fff;border-color:#8eaaca"></div>
<div class="lbl t" style="left:611.6px;top:302.1px;">,</div>
<div class="lbl t" style="left:482px;top:324px;">FEFCO-Code</div>
<div class="fld" style="left:566.2px;top:323.1px;width:62.3px;height:14.2px;background:#ffff33;border-color:#94a8c8"></div>
<div class="abtn" style="left:567.4000000000001px;top:324.6px;width:15px;height:13.2px;background:linear-gradient(#ffff4a,#f2f23a 60%,#e6e62e);box-shadow:0 0 0 .7px #c9c94a inset;"><svg class="ar" viewBox="0 0 12 10" width="10.5" height="9.2"><path d="M1.2 2.8h4.6V.6L11.4 5 5.8 9.4V7.2H1.2L2.4 5z" fill="#fdb827" stroke="#ee9a16" stroke-width=".7" stroke-linejoin="round"/><path d="M2.6 3.6h4V2.4L9.6 4.6" fill="none" stroke="#ffd96a" stroke-width=".8"/></svg></div>
<div class="lbl t" style="left:587px;top:323.90000000000003px;">0201</div>
<div style="left:23.3px;top:345.7px;width:605.7px;height:163.6px;background:#fff;box-shadow:1.3px 1.3px 0 0 #6c6c6c inset"></div>
<div class="gh" style="left:24.6px;width:13.799999999999997px;background:linear-gradient(90deg,#ebebf2,#c9c9d6)"></div>
<div class="gh" style="left:39.4px;width:76.4px"><span style="padding-right:6px">VP-Einheit</span></div>
<div class="ga" style="left:109.3px;top:354px"></div>
<div class="gh" style="left:116.8px;width:76.7px"><span style="padding-right:6px">Bezeichnung</span></div>
<div class="ga" style="left:187px;top:354px"></div>
<div class="gh" style="left:194.5px;width:64px"><span style="padding-right:6px">Länge</span></div>
<div class="ga" style="left:252px;top:354px"></div>
<div class="gh" style="left:259.5px;width:64px"><span style="padding-right:6px">Breite</span></div>
<div class="ga" style="left:317px;top:354px"></div>
<div class="gh" style="left:324.5px;width:63.5px"><span style="padding-right:6px">Dicke</span></div>
<div class="ga" style="left:381.5px;top:354px"></div>
<div class="gh" style="left:389px;width:63.80000000000001px"><span style="padding-right:6px">Inhalt</span></div>
<div class="ga" style="left:446.3px;top:354px"></div>
<div class="gh" style="left:453.8px;width:73.19999999999999px;text-align:left"><span style="padding-left:3.8px">Bruttogewicht</span></div>
<div class="ga" style="left:520.5px;top:354px"></div>
<div class="gh" style="left:528px;width:79px;text-align:left;border-right:none"><span style="padding-left:6px">Kubikmeter (m3)</span></div>
<div style="left:613.9px;top:346px;width:1.2px;height:4px;background:#6c6c6c"></div>
<div style="left:24.6px;top:496.3px;width:604.4px;height:13.2px;background:#f5f5f8"></div>
<div style="left:24.6px;top:496.3px;width:4.7px;height:13.2px;background:#fff"></div>
<div style="left:43.5px;top:496.3px;width:311px;height:13px;background:linear-gradient(#f9f9f9,#e4e4e4 40%,#cfcfcf 58%,#e9e9e9);border-right:1px solid #8a8a8a;box-sizing:border-box"></div>
<div style="left:44.5px;top:509.2px;width:310px;height:1.2px;background:#7d7d7d"></div>
<div style="left:23.3px;top:509.2px;width:21.5px;height:1.3px;background:#2c2c3a"></div>
<div style="left:29.3px;top:496.3px;width:14.4px;height:13px;background:linear-gradient(#f1f1f1,#d4d4d4 50%,#e6e6e6);border-right:1.3px solid #2e2e44;border-left:1.3px solid #2e2e44;box-sizing:border-box"></div>
<svg style="position:absolute;left:33.6px;top:499.3px" width="4.8" height="6.8" viewBox="0 0 4 5.6"><path d="M3.7.3.4 2.8l3.3 2.5z" fill="#fff" stroke="#cfcfcf" stroke-width=".4"/></svg>
<div style="left:602.9px;top:348.6px;width:297.1px;height:195px;background:linear-gradient(#4a596e 0,#4a596e .9px,#7792b8 1px,#7792b8);border-radius:4.5px 6px 0 0"></div>
<div style="left:603.7px;top:349.5px;width:295.4px;height:195px;background:linear-gradient(#a9d2fa,#a6d0fa 22px,#8cc3f8 60px,#82bdf8 100px,#82bdf8);border-radius:5px 5px 0 0"></div>
<div style="left:603.7px;top:349.5px;width:295.4px;height:19.8px;border-radius:5px 5px 0 0;background:linear-gradient(90deg,#cbe3fa,#c4dff9 22%,#9acbf6 42%,#8cc4f5 58%,#a6d1f7 72%,#b4d8f8)"></div>
<div style="left:606.2px;top:369.2px;width:290.8px;height:175px;background:#fff;box-shadow:1px .9px 0 0 #55657a inset"></div>
<div style="left:607.2px;top:369.2px;width:289.8px;height:.9px;background:#6a87a8"></div>
<div style="left:607.2px;top:370.1px;width:289.8px;height:22.7px;background:#bfd6f7"></div>
<div style="left:607.2px;top:370.6px;width:83.8px;height:21.8px;border-radius:0 3.5px 3.5px 0;background:linear-gradient(#dbe8fc,#bfd4f5 38%,#a0bcec 72%,#7f9fda 94%,#6f90cf)"></div>
<svg style="position:absolute;left:607px;top:355.5px" width="11.5" height="9.5" viewBox="0 0 12 10"><path d="M1 3.4h5.2V.8L11.3 5 6.2 9.2V6.6H1z" fill="#f7a81c" stroke="#d07c10" stroke-width="1"/></svg>
<div class="lbl s" style="left:623.5px;top:351.5px;color:#111">Vorgabewerte</div>
<div style="left:814.3px;top:349.5px;width:83px;height:15px;border-radius:0 0 3.5px 3.5px;border:.8px solid #4a5d78;border-top:none;box-sizing:border-box;background:linear-gradient(90deg,rgba(0,0,0,0) 0,rgba(0,0,0,0) 22.5px,#4a5d78 22.5px,#4a5d78 23.3px,rgba(0,0,0,0) 23.3px,rgba(0,0,0,0) 44px,#4a5d78 44px,#4a5d78 44.8px,rgba(0,0,0,0) 44.8px),linear-gradient(#dce9f7,#c5d9ef 46%,#a5c2e3 52%,#c2d9f1)"></div>
<div style="left:859.5px;top:349.5px;width:37.2px;height:14.2px;border-radius:0 0 3px 0;background:linear-gradient(#e7a99b,#d4705c 46%,#c23a20 52%,#d8785c)"></div>
<div style="left:821.5px;top:357.8px;width:8px;height:2px;background:#fafcff;border:.7px solid #4c5c74;border-radius:1px"></div>
<div style="left:844.2px;top:353.2px;width:6.6px;height:5px;background:#fafcff;border:.7px solid #4c5c74;box-shadow:0 0 0 1.2px #fafcff inset,0 0 0 1.9px #4c5c74 inset"></div>
<svg style="position:absolute;left:873.5px;top:352.5px" width="10" height="8.5" viewBox="0 0 9 8"><path d="M1 .8h2l1.5 1.9L6 .8h2L5.6 4 8 7.2H6L4.5 5.3 3 7.2H1L3.4 4z" fill="#fff" stroke="#5e3430" stroke-width=".6"/></svg>
<svg style="position:absolute;left:612.5px;top:375.3px" width="10" height="12" viewBox="0 0 10.5 12.5"><defs><linearGradient id="dg2" x1="0" y1="0" x2="1" y2="1"><stop offset="0" stop-color="#fbfdff"/><stop offset=".55" stop-color="#e3edfb"/><stop offset="1" stop-color="#bdd2f4"/></linearGradient></defs><path d="M.6.6h6.4l2.9 2.9v8.4H.6z" fill="url(#dg2)" stroke="#7a90ba" stroke-width=".9"/><path d="M9.9 3.5v8.4H.6" fill="none" stroke="#56698f" stroke-width="1"/><path d="M7 .6v2.9h2.9z" fill="#9fc0f0" stroke="#6a84b4" stroke-width=".6"/></svg>
<svg style="position:absolute;left:631.2px;top:376px" width="10.4" height="10.6" viewBox="0 0 11 11"><path d="M1 1 10 10M10 1 1 10" stroke="#dc1c28" stroke-width="1.6" stroke-linecap="round"/></svg>
<svg style="position:absolute;left:651.3px;top:376px" width="11" height="11" viewBox="0 0 11.5 11.5"><path d="M.4.4h10.7v10.7H1.8L.4 9.7z" fill="#4d4fd6" stroke="#2a2b8e" stroke-width=".6"/><path d="M.7.7h1.3v9.8H1.6L.7 9.6z" fill="#7d7fe6"/><rect x="2.3" y=".7" width="7" height="4.8" fill="#f6f7fc"/><rect x="2.8" y="6.9" width="6" height="4.1" fill="#26264e"/><rect x="3.5" y="7.7" width="2" height="2.7" fill="#f0f1f7"/></svg>
<div style="left:667.3px;top:375.5px;width:1px;height:11px;background:#9db4e0"></div><div style="left:668.2px;top:375.5px;width:1px;height:11px;background:#dfe9fa"></div>
<svg style="position:absolute;left:675px;top:374.8px" width="10.4" height="12.4" viewBox="0 0 10.4 12.4"><path d="M.6.7 9 .5 6.7 3C9.9 5.2 10 9 7.6 11.9L4.6 11.6C6.4 9 6.2 6.6 4.2 5.3L1.8 7.9z" fill="#2fb52f" stroke="#137a1b" stroke-width=".8" stroke-linejoin="round"/><path d="M1.6 1.6 6.8 1.4 3.2 4.8z" fill="#7fe070"/></svg>
<div style="left:607px;top:393px;width:14.2px;height:16.5px;background:linear-gradient(90deg,#ebebf2,#c9c9d6);border-right:1px solid #77778a"></div>
<div style="left:622.2px;top:393px;width:47.6px;height:16.5px;background:linear-gradient(#f7f7fb,#e3e3ec 45%,#b9b9c9);border-right:1px solid #77778a"></div>
<div style="left:670.8px;top:393px;width:201px;height:16.5px;background:linear-gradient(#f7f7fb,#e3e3ec 45%,#b9b9c9);border-right:1px solid #77778a"></div>
<div class="lbl t" style="left:628.3px;top:393.3px">Code</div>
<div class="lbl t" style="left:670.8px;top:393.3px;width:201px;text-align:center"><span style="padding-right:16px">Bezeichnung</span></div>
<svg style="position:absolute;left:654.8px;top:397.8px" width="6.2" height="5.5" viewBox="0 0 5.2 4.6"><path d="M2.6.5.5 4.1h4.2z" fill="#fdfdfd" stroke="#b4b4c2" stroke-width=".6"/></svg>
<svg style="position:absolute;left:857px;top:397.8px" width="6.2" height="5.5" viewBox="0 0 5.2 4.6"><path d="M2.6.5.5 4.1h4.2z" fill="#fdfdfd" stroke="#b4b4c2" stroke-width=".6"/></svg>
<div class="ga" style="left:663px;top:400.2px"></div>
<div class="ga" style="left:866.3px;top:400.2px"></div>
<div style="left:607px;top:409.8px;width:14.2px;height:33px;background:linear-gradient(90deg,#ebebf2,#cfcfdb);border-right:1px solid #8a8a9c"></div>
<div style="left:607px;top:426.2px;width:15px;height:0;border-top:.9px dashed #7aa3c8"></div>
<div style="left:622.2px;top:409.8px;width:250px;height:16.6px;background:linear-gradient(#eef3fc,#b9cdf1 45%,#5a86dc 92%,#3e6ccc);outline:1px dotted #1a1a2a;outline-offset:-1px"></div>
<div style="left:670.3px;top:409.8px;width:1px;height:33px;background:#9fb2d0"></div>
<div style="left:622.2px;top:426.7px;width:249.5px;height:15.3px;border:.8px solid #8fa8cc;border-top:none;border-left:none"></div>
<svg style="position:absolute;left:612.6px;top:414.2px" width="4.7" height="7.4" viewBox="0 0 4.2 7"><path d="M.3.3 3.9 3.5.3 6.7z" fill="#000"/></svg>
<div class="lbl t" style="left:626.5px;top:408.9px;font-weight:bold;font-size:8.8px;color:#000">0201</div>
<div class="lbl t" style="left:675.2px;top:408.9px;font-weight:bold;font-size:8.95px;color:#000">Standard Faltkarton</div>
<div class="lbl t" style="left:626.5px;top:425.4px">0300</div>
<div class="lbl t" style="left:675.2px;top:425.4px">Zweit. Stülpdeckelschachtel</div>
<svg style="position:absolute;left:578px;top:333px" width="50" height="34" viewBox="0 0 50 34"><path d="M6 4.5 36 23.8" stroke="#c6141a" stroke-width="2.9" stroke-linecap="round"/><path d="M45.2 28.9 30.8 27.6 38.2 17z" fill="#c6141a"/></svg>
</body></html>
